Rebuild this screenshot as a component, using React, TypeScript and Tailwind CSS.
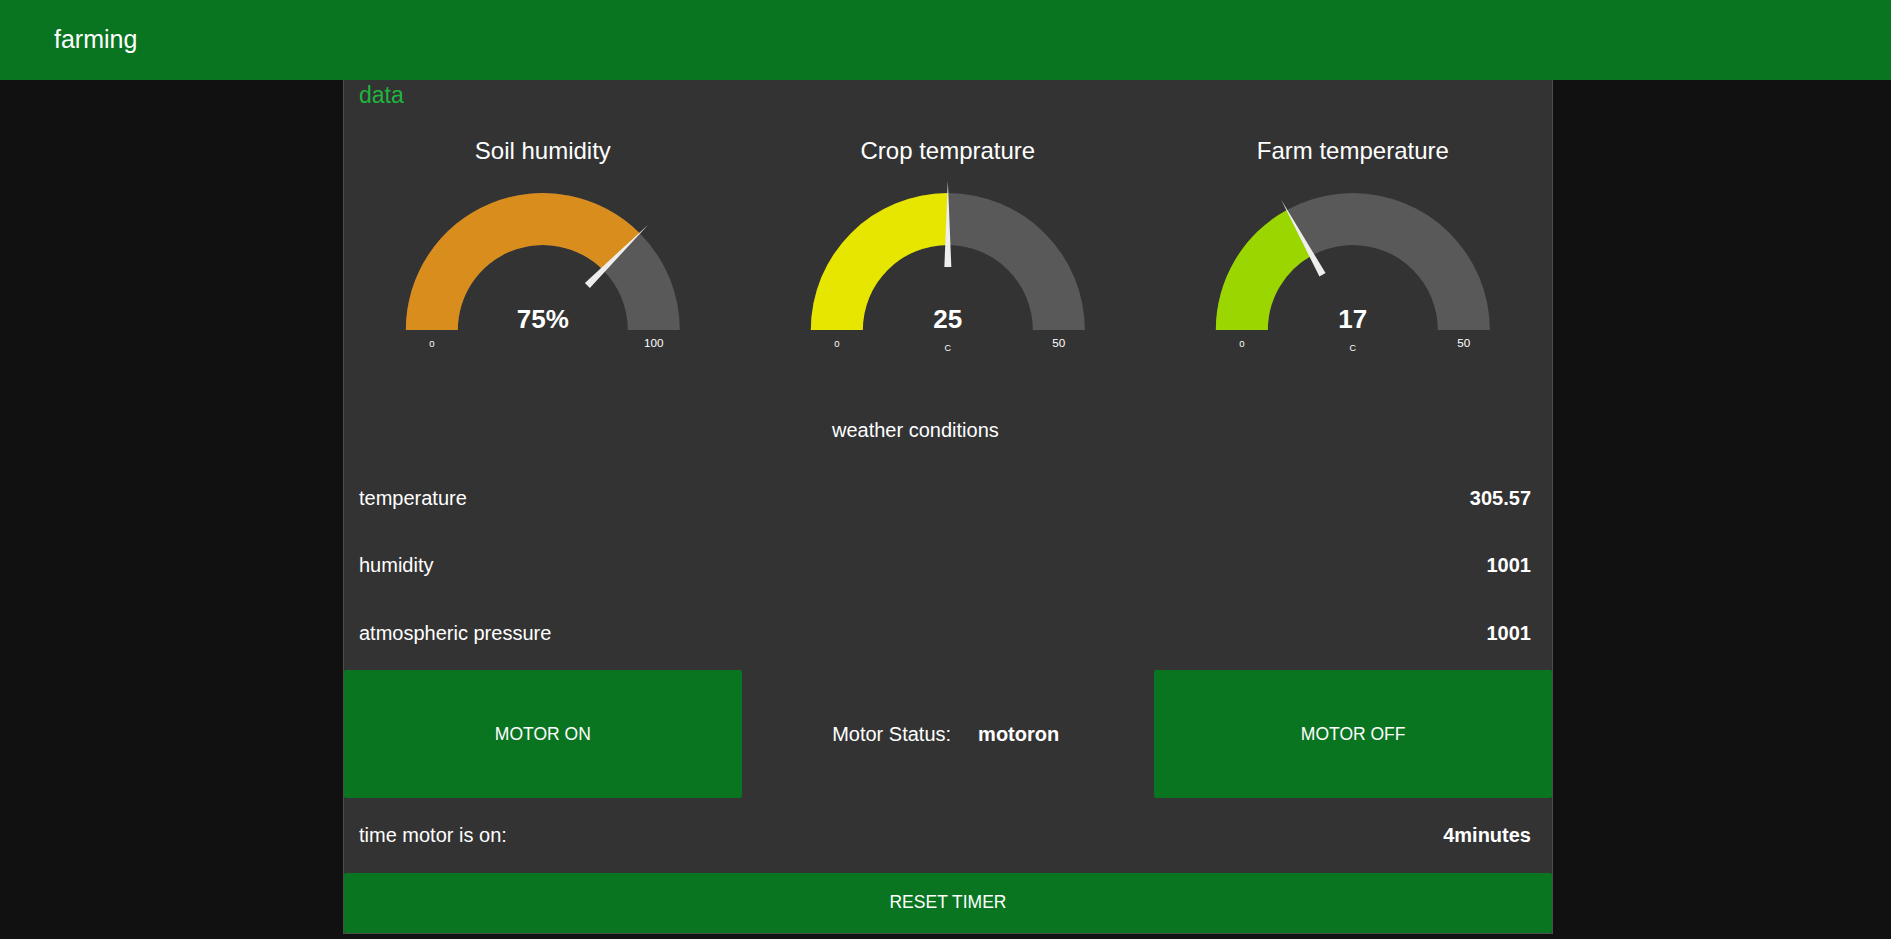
import React from "react";

type GaugeProps = {
  title: string;
  value: number;
  min: number;
  max: number;
  color: string;
  display: string;
  unit?: string;
};

function Gauge({ title, value, min, max, color, display, unit }: GaugeProps) {
  const frac = (value - min) / (max - min);
  const cx = 198.8;
  const cy = 200;
  const R = 137;
  const r = 85;
  const ang = Math.PI * (1 - frac);
  const pt = (rad: number, a: number) => [cx + rad * Math.cos(a), cy - rad * Math.sin(a)];
  const bg = `M ${cx - R} ${cy} A ${R} ${R} 0 0 1 ${cx + R} ${cy} L ${cx + r} ${cy} A ${r} ${r} 0 0 0 ${cx - r} ${cy} Z`;
  const [ox, oy] = pt(R, ang);
  const [ix, iy] = pt(r, ang);
  const fg = `M ${cx - R} ${cy} A ${R} ${R} 0 0 1 ${ox} ${oy} L ${ix} ${iy} A ${r} ${r} 0 0 0 ${cx - r} ${cy} Z`;
  const [tx, ty] = pt(149, ang);
  const [bx, by] = pt(63, ang);
  const perp = ang + Math.PI / 2;
  const w = 3.5;
  const b1 = [bx + w * Math.cos(perp), by - w * Math.sin(perp)];
  const b2 = [bx - w * Math.cos(perp), by + w * Math.sin(perp)];
  const needle = `M ${b1[0]} ${b1[1]} L ${tx} ${ty} L ${b2[0]} ${b2[1]} Z`;
  return (
    <svg width="100%" height="262.5" viewBox="0 0 397.6 262.5" className="block">
      <text x={cx} y={29} textAnchor="middle" fill="#ffffff" fontSize="24" fontFamily="'Liberation Sans', Arial, sans-serif">
        {title}
      </text>
      <path d={bg} fill="#595959" />
      <path d={fg} fill={color} />
      <path d={needle} fill="#eeeeee" />
      <text x={cx} y={198} textAnchor="middle" fill="#ffffff" fontSize="26" fontWeight="bold" fontFamily="'Liberation Sans', Arial, sans-serif">
        {display}
      </text>
      <text x={cx - 111} y={216.7} textAnchor="middle" fill="#ffffff" fontSize="9.5" fontFamily="'Liberation Sans', Arial, sans-serif">
        {min}
      </text>
      <text x={cx + 111} y={216.7} textAnchor="middle" fill="#ffffff" fontSize="11.7" fontFamily="'Liberation Sans', Arial, sans-serif">
        {max}
      </text>
      {unit && (
        <text x={cx} y={220.7} textAnchor="middle" fill="#ffffff" fontSize="9" fontFamily="'Liberation Sans', Arial, sans-serif">
          {unit}
        </text>
      )}
    </svg>
  );
}

function Row({ label, value }: { label: string; value: string }) {
  return (
    <div className="h-[60px] flex items-center justify-between pl-[15px] pr-[21px] text-[20px]">
      <span>{label}</span>
      <span className="font-bold">{value}</span>
    </div>
  );
}

export default function App() {
  return (
    <div className="min-h-screen bg-[#111111] font-['Liberation_Sans',Arial,sans-serif] text-white">
      <header className="h-[80px] bg-[#097521] flex items-center pl-[54px] text-[25px] text-white">farming</header>
      <div className="ml-[343px] w-[1210px] bg-[#333333] border-x border-b border-[#4d4d4d]">
        <div className="h-[50px] pl-[15px] text-[23px] leading-[30px] text-[#1fb53c]">data</div>
        <div className="flex flex-col gap-[7.5px]">
          <div className="grid grid-cols-3 gap-[7.5px] h-[262.5px]">
            <Gauge title="Soil humidity" value={75} min={0} max={100} color="#d88d1c" display="75%" />
            <Gauge title="Crop temprature" value={25} min={0} max={50} color="#e6e600" display="25" unit="C" />
            <Gauge title="Farm temperature" value={17} min={0} max={50} color="#9cd600" display="17" unit="C" />
          </div>
          <div className="h-[60px] flex items-center pl-[488px] text-[20px]">weather conditions</div>
          <Row label="temperature" value="305.57" />
          <Row label="humidity" value="1001" />
          <Row label="atmospheric pressure" value="1001" />
          <div className="grid grid-cols-3 gap-[7.5px] h-[127.5px]">
            <button className="bg-[#097521] rounded-[2px] flex items-center justify-center text-[17.5px] text-white">MOTOR ON</button>
            <div className="flex items-center pl-[83px] text-[20px]">
              <span>Motor Status:</span>
              <span className="font-bold ml-[27px]">motoron</span>
            </div>
            <button className="bg-[#097521] rounded-[2px] flex items-center justify-center text-[17.5px] text-white">MOTOR OFF</button>
          </div>
          <Row label="time motor is on:" value="4minutes" />
          <button className="h-[60px] bg-[#097521] rounded-[2px] flex items-center justify-center text-[17.5px] text-white w-full">RESET TIMER</button>
        </div>
      </div>
    </div>
  );
}
